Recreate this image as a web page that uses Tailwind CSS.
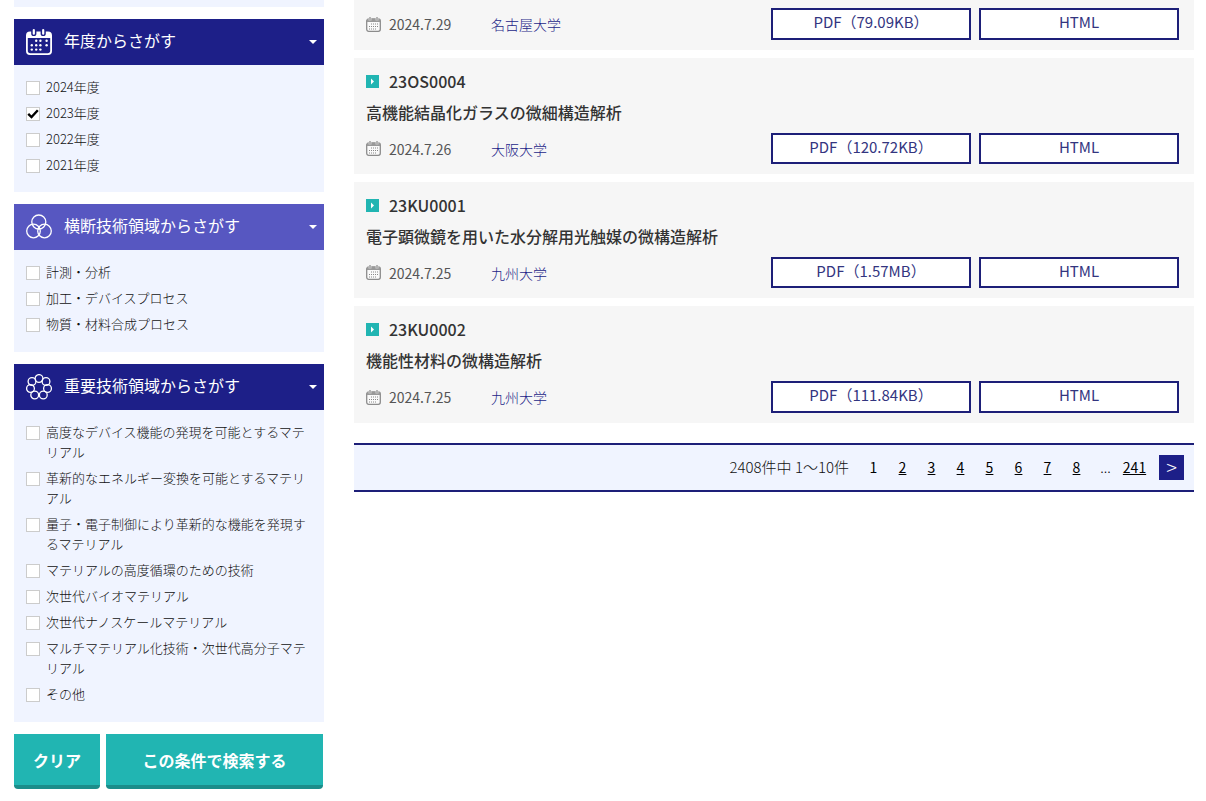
<!DOCTYPE html>
<html lang="ja">
<head>
<meta charset="utf-8">
<meta name="viewport" content="width=device-width, initial-scale=1">
<title>検索結果</title>
<script src="https://cdn.jsdelivr.net/npm/@tailwindcss/browser@4"></script>
</head>
<body class="bg-white font-['Noto_Sans_CJK_JP',sans-serif] text-[#333]">
<svg class="hidden" aria-hidden="true">
  <symbol id="calendar" viewBox="0 0 26 26">
    <path fill="currentColor" fill-rule="evenodd" d="M4 2.500H5.200V4.500a2.600 2.600 0 0 0 5.200 0V2.500h4.200V4.500a2.600 2.600 0 0 0 5.200 0V2.500h2.200a4 4 0 0 1 4 4V22a4 4 0 0 1-4 4H4a4 4 0 0 1-4-4V6.500a4 4 0 0 1 4-4zM1.800 9v12.500A2.600 2.600 0 0 0 4.400 24.200h17.200a2.600 2.600 0 0 0 2.600-2.700V9z"/>
    <rect x="6.700" y="0" width="2.200" height="5.800" rx="1.100" fill="currentColor"/>
    <rect x="16.100" y="0" width="2.200" height="5.800" rx="1.100" fill="currentColor"/>
    <g fill="currentColor"><circle cx="10.200" cy="11.800" r="1.200"/><circle cx="14.400" cy="11.800" r="1.200"/><circle cx="20.600" cy="11.800" r="1.200"/><circle cx="5.800" cy="16.300" r="1.200"/><circle cx="10.200" cy="16.300" r="1.200"/><circle cx="14.400" cy="16.300" r="1.200"/><circle cx="20.600" cy="16.300" r="1.200"/><circle cx="5.800" cy="20.600" r="1.200"/><circle cx="10.200" cy="20.600" r="1.200"/><circle cx="14.400" cy="20.600" r="1.200"/></g>
  </symbol>
  <symbol id="small-calendar" viewBox="0 0 15 15">
    <rect x=".7" y="2" width="13.600" height="12.300" rx="2" fill="#fafafa" stroke="#8c8c8c" stroke-width="1.300"/>
    <path fill="#999" d="M1 2h13v3H1z"/>
    <path stroke="#f6f6f6" stroke-width="2.600" d="M4 0v3.500M11 0v3.500"/>
    <path stroke="#888" stroke-width="1.200" d="M4 0v3.500M11 0v3.500"/>
    <path fill="#888" d="M5 6.500h1v1H5zM7 6.500h1v1H7zM9 6.500h1v1H9zM11 6.500h1v1h-1zM3 9h1v1H3zM5 9h1v1H5zM7 9h1v1H7zM9 9h1v1H9zM11 9h1v1h-1zM3 11.500h1v1H3zM5 11.500h1v1H5zM7 11.500h1v1H7zM9 11.500h1v1H9z"/>
  </symbol>
  <symbol id="arrow" viewBox="0 0 13 13"><path fill="#21b5b2" d="M0 0h13v13H0z"/><path fill="#fff" d="M5 3.500 8 6.500 5 9.500z"/></symbol>
  <symbol id="caret" viewBox="0 0 8 4"><path fill="#fff" d="M0 0h8L4 4z"/></symbol>
  <symbol id="check" viewBox="0 0 14 14"><path fill="none" stroke="#000" stroke-width="2.400" d="M2.200 6.800 5.500 10 11.800 3.300"/></symbol>
</svg>
<div class="flex items-start gap-[30px] pr-3 pl-3.5">
  <form class="w-[310px] shrink-0" onsubmit="return false">
    <div class="h-[7px] bg-[#f0f4ff]"></div>

    <section class="mt-3 bg-[#f0f4ff]">
      <button type="button" class="flex h-[46px] w-full items-center gap-3 bg-[#1d1f88] pr-[7px] pl-3 text-left text-white">
        <svg class="size-[26px]"><use href="#calendar"/></svg>
        <span class="flex-1 pb-1 text-base">年度からさがす</span>
        <svg class="h-1 w-2"><use href="#caret"/></svg>
      </button>
      <ul class="space-y-1.5 px-3 pt-3 pb-[17px] text-[13px] leading-5 font-light text-[#111]">
        <li><label class="flex gap-1.5"><input type="checkbox" class="mt-1 size-3.5 shrink-0 appearance-none border border-[#ccc] bg-white"><span>2024年度</span></label></li>
        <li><label class="relative flex gap-1.5"><input type="checkbox" checked class="peer mt-1 size-3.5 shrink-0 appearance-none border border-[#ccc] bg-white"><svg class="pointer-events-none absolute top-1 left-0 hidden size-3.5 peer-checked:block"><use href="#check"/></svg><span>2023年度</span></label></li>
        <li><label class="flex gap-1.5"><input type="checkbox" class="mt-1 size-3.5 shrink-0 appearance-none border border-[#ccc] bg-white"><span>2022年度</span></label></li>
        <li><label class="flex gap-1.5"><input type="checkbox" class="mt-1 size-3.5 shrink-0 appearance-none border border-[#ccc] bg-white"><span>2021年度</span></label></li>
      </ul>
    </section>

    <section class="mt-3 bg-[#f0f4ff]">
      <button type="button" class="flex h-[46px] w-full items-center gap-3 bg-[#5757c1] pr-[7px] pl-3 text-left text-white">
        <svg class="size-[26px]" viewBox="0 0 26 26" fill="none" stroke="#fff" stroke-width="1.300"><circle cx="12.800" cy="8" r="7"/><circle cx="7.500" cy="17" r="6.800"/><circle cx="18.500" cy="17" r="6.800"/></svg>
        <span class="flex-1 pb-1 text-base">横断技術領域からさがす</span>
        <svg class="h-1 w-2"><use href="#caret"/></svg>
      </button>
      <ul class="space-y-1.5 px-3 pt-3 pb-[18px] text-[13px] leading-5 font-light text-[#111]">
        <li><label class="flex gap-1.5"><input type="checkbox" class="mt-1 size-3.5 shrink-0 appearance-none border border-[#ccc] bg-white"><span>計測・分析</span></label></li>
        <li><label class="flex gap-1.5"><input type="checkbox" class="mt-1 size-3.5 shrink-0 appearance-none border border-[#ccc] bg-white"><span>加工・デバイスプロセス</span></label></li>
        <li><label class="flex gap-1.5"><input type="checkbox" class="mt-1 size-3.5 shrink-0 appearance-none border border-[#ccc] bg-white"><span>物質・材料合成プロセス</span></label></li>
      </ul>
    </section>

    <section class="mt-3 bg-[#f0f4ff]">
      <button type="button" class="flex h-[46px] w-full items-center gap-3 bg-[#1d1f88] pr-[7px] pl-3 text-left text-white">
        <svg class="size-[26px]" viewBox="0 0 26 26" fill="none" stroke="#fff" stroke-width="1.300"><circle cx="13" cy="4.500" r="3.900"/><circle cx="20" cy="7.500" r="3.900"/><circle cx="21.500" cy="14.500" r="3.900"/><circle cx="17.300" cy="21" r="3.900"/><circle cx="8.700" cy="21" r="3.900"/><circle cx="4.500" cy="14.500" r="3.900"/><circle cx="6" cy="7.500" r="3.900"/></svg>
        <span class="flex-1 pb-1 text-base">重要技術領域からさがす</span>
        <svg class="h-1 w-2"><use href="#caret"/></svg>
      </button>
      <ul class="space-y-1.5 px-3 pt-3 pb-[18px] text-[13px] leading-5 font-light text-[#111]">
        <li><label class="flex gap-1.5"><input type="checkbox" class="mt-1 size-3.5 shrink-0 appearance-none border border-[#ccc] bg-white"><span>高度なデバイス機能の発現を可能とするマテリアル</span></label></li>
        <li><label class="flex gap-1.5"><input type="checkbox" class="mt-1 size-3.5 shrink-0 appearance-none border border-[#ccc] bg-white"><span>革新的なエネルギー変換を可能とするマテリアル</span></label></li>
        <li><label class="flex gap-1.5"><input type="checkbox" class="mt-1 size-3.5 shrink-0 appearance-none border border-[#ccc] bg-white"><span>量子・電子制御により革新的な機能を発現するマテリアル</span></label></li>
        <li><label class="flex gap-1.5"><input type="checkbox" class="mt-1 size-3.5 shrink-0 appearance-none border border-[#ccc] bg-white"><span>マテリアルの高度循環のための技術</span></label></li>
        <li><label class="flex gap-1.5"><input type="checkbox" class="mt-1 size-3.5 shrink-0 appearance-none border border-[#ccc] bg-white"><span>次世代バイオマテリアル</span></label></li>
        <li><label class="flex gap-1.5"><input type="checkbox" class="mt-1 size-3.5 shrink-0 appearance-none border border-[#ccc] bg-white"><span>次世代ナノスケールマテリアル</span></label></li>
        <li><label class="flex gap-1.5"><input type="checkbox" class="mt-1 size-3.5 shrink-0 appearance-none border border-[#ccc] bg-white"><span>マルチマテリアル化技術・次世代高分子マテリアル</span></label></li>
        <li><label class="flex gap-1.5"><input type="checkbox" class="mt-1 size-3.5 shrink-0 appearance-none border border-[#ccc] bg-white"><span>その他</span></label></li>
      </ul>
    </section>

    <div class="mt-3 flex gap-1.5 pr-px">
      <button type="reset" class="h-[55px] w-[86px] rounded-b border-b-4 border-[#1b8d8a] bg-[#21b5b2] text-base font-bold text-white">クリア</button>
      <button type="submit" class="h-[55px] flex-1 rounded-b border-b-4 border-[#1b8d8a] bg-[#21b5b2] text-base font-bold text-white">この条件で検索する</button>
    </div>
  </form>

  <main class="min-w-0 flex-1">
    <div class="space-y-2">
      <article class="bg-[#f6f6f6] pt-2 pr-[15px] pb-2.5 pl-3">
        <div class="flex items-center gap-2 text-sm">
          <svg class="size-[15px]"><use href="#small-calendar"/></svg>
          <time class="w-[94px] text-[#555]">2024.7.29</time>
          <a href="#" class="flex-1 font-light text-[#1d1f88]">名古屋大学</a>
          <a href="#" class="h-8 w-[200px] border-2 border-[#1d1f78] bg-white text-center text-[15px] leading-6 text-[#33357f]">PDF（79.09KB）</a>
          <a href="#" class="h-8 w-[200px] border-2 border-[#1d1f78] bg-white text-center text-[15px] leading-6 text-[#33357f]">HTML</a>
        </div>
      </article>
      <article class="bg-[#f6f6f6] pt-[11px] pr-[15px] pb-2.5 pl-3">
        <p class="flex items-center gap-2.5 text-base leading-6 font-medium"><svg class="size-[13px]"><use href="#arrow"/></svg>23OS0004</p>
        <h3 class="mt-[7px] text-base leading-6 font-medium">高機能結晶化ガラスの微細構造解析</h3>
        <div class="mt-[9px] flex items-center gap-2 text-sm">
          <svg class="size-[15px]"><use href="#small-calendar"/></svg>
          <time class="w-[94px] text-[#555]">2024.7.26</time>
          <a href="#" class="flex-1 font-light text-[#1d1f88]">大阪大学</a>
          <a href="#" class="h-[31px] w-[200px] border-2 border-[#1d1f78] bg-white text-center text-[15px] leading-6 text-[#33357f]">PDF（120.72KB）</a>
          <a href="#" class="h-[31px] w-[200px] border-2 border-[#1d1f78] bg-white text-center text-[15px] leading-6 text-[#33357f]">HTML</a>
        </div>
      </article>
      <article class="bg-[#f6f6f6] pt-[11px] pr-[15px] pb-2.5 pl-3">
        <p class="flex items-center gap-2.5 text-base leading-6 font-medium"><svg class="size-[13px]"><use href="#arrow"/></svg>23KU0001</p>
        <h3 class="mt-[7px] text-base leading-6 font-medium">電子顕微鏡を用いた水分解用光触媒の微構造解析</h3>
        <div class="mt-[9px] flex items-center gap-2 text-sm">
          <svg class="size-[15px]"><use href="#small-calendar"/></svg>
          <time class="w-[94px] text-[#555]">2024.7.25</time>
          <a href="#" class="flex-1 font-light text-[#1d1f88]">九州大学</a>
          <a href="#" class="h-[31px] w-[200px] border-2 border-[#1d1f78] bg-white text-center text-[15px] leading-6 text-[#33357f]">PDF（1.57MB）</a>
          <a href="#" class="h-[31px] w-[200px] border-2 border-[#1d1f78] bg-white text-center text-[15px] leading-6 text-[#33357f]">HTML</a>
        </div>
      </article>
      <article class="bg-[#f6f6f6] pt-[11px] pr-[15px] pb-2.5 pl-3">
        <p class="flex items-center gap-2.5 text-base leading-6 font-medium"><svg class="size-[13px]"><use href="#arrow"/></svg>23KU0002</p>
        <h3 class="mt-[7px] text-base leading-6 font-medium">機能性材料の微構造解析</h3>
        <div class="mt-[9px] flex items-center gap-2 text-sm">
          <svg class="size-[15px]"><use href="#small-calendar"/></svg>
          <time class="w-[94px] text-[#555]">2024.7.25</time>
          <a href="#" class="flex-1 font-light text-[#1d1f88]">九州大学</a>
          <a href="#" class="h-8 w-[200px] border-2 border-[#1d1f78] bg-white text-center text-[15px] leading-6 text-[#33357f]">PDF（111.84KB）</a>
          <a href="#" class="h-8 w-[200px] border-2 border-[#1d1f78] bg-white text-center text-[15px] leading-6 text-[#33357f]">HTML</a>
        </div>
      </article>
    </div>

    <nav class="mt-5 flex items-center justify-end border-y-2 border-[#1d1f78] bg-[#f0f4ff] py-2.5 pr-2.5 text-sm leading-[22px] text-black" aria-label="ページ送り">
      <p class="mr-2.5 pb-0.5 text-[15px] font-light text-[#111]">2408件中 1～10件</p>
      <span class="w-[29px] pb-0.5 text-center" aria-current="page">1</span>
      <a href="#" class="w-[29px] pb-0.5 text-center underline">2</a>
      <a href="#" class="w-[29px] pb-0.5 text-center underline">3</a>
      <a href="#" class="w-[29px] pb-0.5 text-center underline">4</a>
      <a href="#" class="w-[29px] pb-0.5 text-center underline">5</a>
      <a href="#" class="w-[29px] pb-0.5 text-center underline">6</a>
      <a href="#" class="w-[29px] pb-0.5 text-center underline">7</a>
      <a href="#" class="w-[29px] pb-0.5 text-center underline">8</a>
      <span class="w-[29px] pb-0.5 text-center font-light">...</span>
      <a href="#" class="w-[29px] pb-0.5 text-center underline">241</a>
      <a href="#" class="ml-2.5 size-[25px] bg-[#1d1f88] text-center text-xl leading-[23px] font-light text-white" aria-label="次へ">&gt;</a>
    </nav>
  </main>
</div>
</body>
</html>
